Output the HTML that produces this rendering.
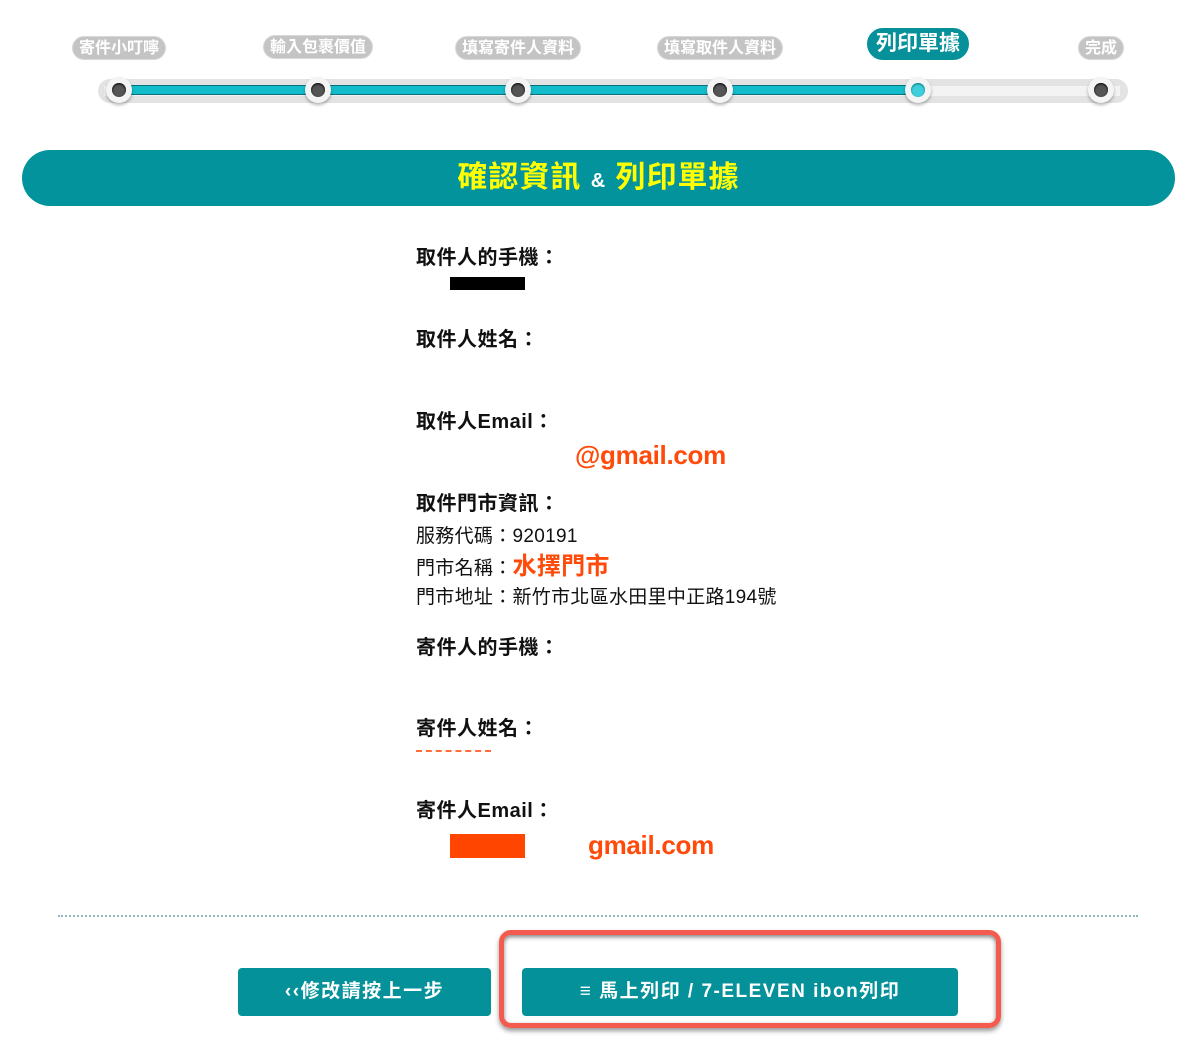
<!DOCTYPE html>
<html><head><meta charset="utf-8"><style>
*{margin:0;padding:0;box-sizing:border-box}
body{width:1200px;height:1040px;background:#fff;position:relative;overflow:hidden;font-family:"Liberation Sans","Noto Sans CJK TC",sans-serif;color:#111}
.a{position:absolute}
.pill{position:absolute;height:24px;border-radius:12px;background:#c4c4c4;color:#fff;font-weight:bold;font-size:16px;line-height:24px;text-align:center;transform:translateX(-50%);white-space:nowrap;padding:0 6px;border:1px solid #d8d8d8}
.knob{position:absolute;top:77px;width:26px;height:26px;border-radius:50%;background:#f4f4f4;box-shadow:0 2px 3px rgba(0,0,0,.3);transform:translateX(-50%)}
.knob i{position:absolute;left:6px;top:6px;width:14px;height:14px;border-radius:50%;background:#555;box-shadow:inset 0 1px 2px #000}
.lab{position:absolute;left:416px;font-weight:bold;font-size:20px;line-height:24px;letter-spacing:.5px}
.t{position:absolute;left:416px;font-size:19px;line-height:22px;letter-spacing:.3px}
.or{color:#ff4a0a}
.em{position:absolute;color:#ff4a0a;font-size:26px;line-height:30px;font-weight:bold;letter-spacing:-.3px}
.btn{position:absolute;top:968px;height:48px;background:#04919a;border-radius:4px;color:#fff;font-weight:bold;font-size:19px;line-height:48px;text-align:center;letter-spacing:1.5px}
</style></head><body>
<div class="a" style="left:98px;top:79px;width:1030px;height:24px;border-radius:12px;background:#e3e3e3"></div>
<div class="a" style="left:104px;top:86px;width:1016px;height:10px;background:#f3f3f3"></div>
<div class="a" style="left:118px;top:85px;width:802px;height:10px;background:#13bccb;border-top:1px solid #08717a;border-bottom:1px solid #08717a"></div>
<div class="pill" style="left:119px;top:36px">寄件小叮嚀</div>
<div class="pill" style="left:318px;top:35px">輸入包裹價值</div>
<div class="pill" style="left:518px;top:36px">填寫寄件人資料</div>
<div class="pill" style="left:720px;top:36px">填寫取件人資料</div>
<div class="pill" style="left:918px;top:28px;height:32px;line-height:30px;border-radius:16px;background:#06919a;border-color:#06919a;font-size:21px;padding:0 8px">列印單據</div>
<div class="pill" style="left:1101px;top:36px">完成</div>
<div class="knob" style="left:119px"><i></i></div>
<div class="knob" style="left:318px"><i></i></div>
<div class="knob" style="left:518px"><i></i></div>
<div class="knob" style="left:720px"><i></i></div>
<div class="knob" style="left:918px"><i style="background:#3fcfdc;box-shadow:inset 0 1px 2px #077"></i></div>
<div class="knob" style="left:1101px"><i></i></div>

<div class="a" style="left:22px;top:150px;width:1153px;height:56px;border-radius:28px;background:#03939c;color:#ffff00;font-weight:bold;font-size:30px;line-height:56px;text-align:center;letter-spacing:1px">確認資訊 <span style="color:#fff;font-size:20px">&amp;</span> 列印單據</div>

<div class="lab" style="top:246px">取件人的手機：</div>
<div class="a" style="left:450px;top:277px;width:75px;height:13px;background:#000"></div>
<div class="lab" style="top:328px">取件人姓名：</div>
<div class="lab" style="top:410px">取件人Email：</div>
<div class="em" style="left:575px;top:440px">@gmail.com</div>
<div class="lab" style="top:492px">取件門市資訊：</div>
<div class="t" style="top:526px">服務代碼：920191</div>
<div class="t" style="top:556px">門市名稱：<span class="or" style="font-size:24px;font-weight:bold">水擇門市</span></div>
<div class="t" style="top:587px">門市地址：新竹市北區水田里中正路194號</div>
<div class="lab" style="top:636px">寄件人的手機：</div>
<div class="lab" style="top:717px">寄件人姓名：</div>
<div class="a" style="left:416px;top:750px;width:75px;height:2px;border-top:2px dashed #ff4a0a;opacity:.8"></div>
<div class="lab" style="top:799px">寄件人Email：</div>
<div class="a" style="left:450px;top:834px;width:75px;height:24px;background:#ff4500"></div>
<div class="em" style="left:588px;top:830px">gmail.com</div>

<div class="a" style="left:58px;top:915px;width:1080px;border-top:2px dotted #8fb9bd"></div>
<div class="btn" style="left:238px;width:253px">‹‹修改請按上一步</div>
<div class="a" style="left:499px;top:930px;width:502px;height:98px;border:5px solid #f55a4e;border-radius:12px;box-shadow:0 3px 5px rgba(0,0,0,.4),inset 0 2px 4px rgba(0,0,0,.5)"></div>
<div class="btn" style="left:522px;width:436px">≡ 馬上列印 / 7-ELEVEN ibon列印</div>
</body></html>
